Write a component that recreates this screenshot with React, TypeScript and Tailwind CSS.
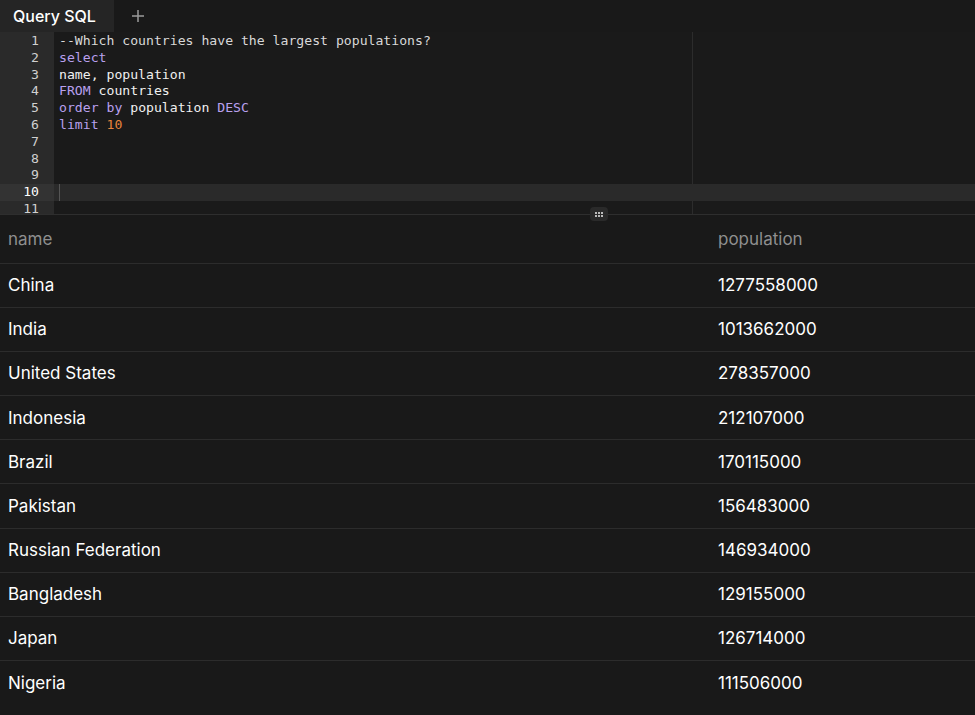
import React from 'react';

const ROWS: [string, string][] = [
  ['China', '1277558000'],
  ['India', '1013662000'],
  ['United States', '278357000'],
  ['Indonesia', '212107000'],
  ['Brazil', '170115000'],
  ['Pakistan', '156483000'],
  ['Russian Federation', '146934000'],
  ['Bangladesh', '129155000'],
  ['Japan', '126714000'],
  ['Nigeria', '111506000'],
];

const kw = 'text-[#b9a0ee]';

const CODE: React.ReactNode[] = [
  <span className="text-[#d8d8d8]">--Which countries have the largest populations?</span>,
  <span className={kw}>select</span>,
  <span className="text-[#f0f0f0]">name, population</span>,
  <>
    <span className={kw}>FROM</span> <span className="text-[#f0f0f0]">countries</span>
  </>,
  <>
    <span className={kw}>order by</span> <span className="text-[#f0f0f0]">population</span> <span className={kw}>DESC</span>
  </>,
  <>
    <span className={kw}>limit</span> <span className="text-[#e8843c]">10</span>
  </>,
  null,
  null,
  null,
  null,
  null,
];

export default function App() {
  return (
    <div className="w-[975px] h-[715px] overflow-hidden bg-[#191919] flex flex-col font-['Inter',sans-serif]">
      {/* Tabs */}
      <div className="h-8 flex items-stretch flex-shrink-0 bg-[#191919]">
        <div className="w-[114px] flex items-center pl-[13px] bg-[#252525] text-[16px] font-medium text-white">
          Query SQL
        </div>
        <div className="w-12 flex items-center justify-center text-[#9a9a9a]">
          <svg width="14" height="14" viewBox="0 0 14 14" fill="none" stroke="currentColor" strokeWidth="1.5">
            <path d="M7 1v12M1 7h12" />
          </svg>
        </div>
      </div>

      {/* Editor */}
      <div className="h-[182px] flex-shrink-0 flex overflow-hidden bg-[#1a1a1a] font-['DejaVu_Sans_Mono',monospace] text-[13.15px] leading-[16.8px] relative">
        <div className="w-[54px] flex-shrink-0 bg-[#2a2a2a] pt-[1px]">
          {CODE.map((_, i) => (
            <div
              key={i}
              className={`h-[16.8px] pr-[15px] text-right ${i === 9 ? 'bg-[#333333] text-white' : 'text-[#d0d0d0]'}`}
            >
              {i + 1}
            </div>
          ))}
        </div>
        <div className="flex-1 pt-[1px] relative">
          <div className="absolute top-0 bottom-0 left-[638px] w-px bg-[#2c2c2c]" />
          {CODE.map((line, i) => (
            <div
              key={i}
              className={`h-[16.8px] pl-[5px] whitespace-pre relative ${i === 9 ? 'bg-[#2a2a2a]' : ''}`}
            >
              {i === 9 && <span className="absolute left-[5px] top-0 h-full w-px bg-[#555]" />}
              {line}
            </div>
          ))}
        </div>
      </div>

      {/* Divider with drag handle */}
      <div className="h-px bg-[#2e2e2e] flex-shrink-0 relative">
        <div className="absolute left-[590px] -top-[7px] w-[18px] h-[14px] rounded-[4px] bg-[#2a2a2a] flex items-center justify-center">
          <div className="grid grid-cols-3 gap-[1px]">
            {Array.from({ length: 6 }).map((_, i) => (
              <span key={i} className="w-[2px] h-[2px] bg-[#bbbbbb]" />
            ))}
          </div>
        </div>
      </div>

      {/* Results */}
      <div className="flex-1 overflow-hidden text-[17px]">
        <div className="h-[49px] flex items-center pt-[2px] border-b border-[#2c2c2c] text-[#8f8f8f]">
          <div className="w-[718px] pl-2">name</div>
          <div className="flex-1">population</div>
        </div>
        {ROWS.map(([name, pop], i) => (
          <div
            key={name}
            className={`h-[44.1px] flex items-center pt-[1px] text-white ${i < ROWS.length - 1 ? 'border-b border-[#2c2c2c]' : ''}`}
          >
            <div className="w-[718px] pl-2">{name}</div>
            <div className="flex-1">{pop}</div>
          </div>
        ))}
      </div>
    </div>
  );
}
